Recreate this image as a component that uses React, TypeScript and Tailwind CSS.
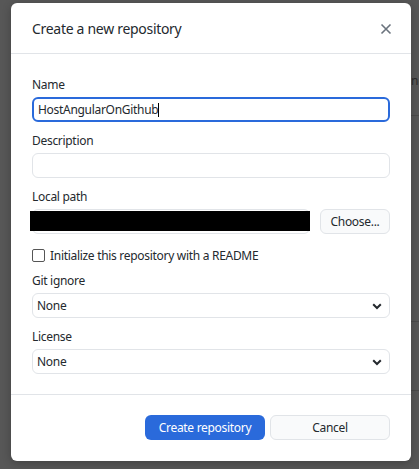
import React from "react";

const font = { fontFamily: '"Noto Sans", "Open Sans", sans-serif' };

function Field({ label, children }: { label: string; children: React.ReactNode }) {
  return (
    <div className="flex flex-col">
      <label className="text-[12px] leading-[16px] tracking-[-0.3px] text-[#24292e] mb-[4px]">{label}</label>
      {children}
    </div>
  );
}

function Chevron() {
  return (
    <svg width="10" height="7" viewBox="0 0 10 7" className="absolute right-[7px] top-[9px]">
      <path d="M1.2 1.2 L5 5 L8.8 1.2" fill="none" stroke="#24292e" strokeWidth="2" />
    </svg>
  );
}

function SelectBox({ value }: { value: string }) {
  return (
    <div className="relative h-[25px] rounded-[6px] border border-[#e1e4e8] bg-white flex items-center pl-[4px] text-[12px] tracking-[-0.3px] text-[#24292e]">
      {value}
      <Chevron />
    </div>
  );
}

export default function App() {
  return (
    <div className="w-[419px] h-[469px] bg-[#575757] overflow-hidden relative" style={font}>
      {/* backdrop bits peeking out on the right */}
      <div className="absolute left-[411px] top-[72px] text-[12px] text-[#2b2b2b]">ne</div>
      <div className="absolute left-[411px] top-[115px] w-[8px] h-px bg-[#4a4a4a]" />
      <div className="absolute left-[411px] top-[321px] w-[8px] h-px bg-[#4a4a4a]" />
      <div className="absolute left-[411px] top-[390px] w-[8px] h-px bg-[#4a4a4a]" />

      <div className="relative ml-[11px] mt-[3px] w-[400px] h-[458px] bg-white rounded-[6px] flex flex-col shadow-[0_2px_8px_rgba(0,0,0,0.25)]">
        <div className="h-[51px] flex items-center justify-between px-[21px] border-b border-[#e1e4e8]">
          <h1 className="text-[14px] tracking-[-0.3px] text-[#24292e] mt-[1px]">Create a new repository</h1>
          <svg width="12" height="12" viewBox="0 0 12 12" className="mr-[-2px] mt-[2px]">
            <path d="M1.5 1.5 L10.5 10.5 M10.5 1.5 L1.5 10.5" stroke="#6a737d" strokeWidth="1.6" />
          </svg>
        </div>

        <div className="flex flex-col px-[21px] pt-[23px] pb-[20px] border-b border-[#e1e4e8]">
          <div className="flex flex-col gap-[11px]">
            <Field label="Name">
              <div className="h-[25px] rounded-[6px] border-2 border-[#2a6adb] flex items-center pl-[4px] text-[12px] tracking-[-0.3px] text-[#24292e]">
                HostAngularOnGithub
                <span className="w-px h-[14px] bg-black" />
              </div>
            </Field>
            <Field label="Description">
              <div className="h-[25px] rounded-[6px] border border-[#e1e4e8]" />
            </Field>
            <Field label="Local path">
              <div className="flex gap-[10px]">
                <div className="relative flex-1 h-[25px] rounded-[6px] border border-[#e1e4e8]">
                  <div className="absolute left-[-3px] right-[-1px] top-[1px] h-[20px] bg-black" />
                </div>
                <button className="w-[70px] h-[25px] rounded-[6px] border border-[#e1e4e8] bg-[#f9fafb] text-[12px] tracking-[-0.3px] text-[#24292e]">
                  Choose...
                </button>
              </div>
            </Field>
          </div>

          <div className="flex items-center gap-[5px] mt-[15px] mb-[11px] h-[13px]">
            <span className="w-[13px] h-[13px] rounded-[2px] border border-[#555] bg-white" />
            <span className="text-[12px] tracking-[-0.3px] text-[#24292e]">Initialize this repository with a README</span>
          </div>

          <div className="flex flex-col gap-[11px]">
            <Field label="Git ignore">
              <SelectBox value="None" />
            </Field>
            <Field label="License">
              <SelectBox value="None" />
            </Field>
          </div>
        </div>

        <div className="flex justify-end gap-[5px] px-[21px] pt-[20px]">
          <button className="w-[120px] h-[25px] rounded-[6px] bg-[#2a6adb] text-white text-[12px] tracking-[-0.3px]">
            Create repository
          </button>
          <button className="w-[120px] h-[25px] rounded-[6px] border border-[#e1e4e8] bg-[#f9fafb] text-[12px] tracking-[-0.3px] text-[#24292e]">
            Cancel
          </button>
        </div>
      </div>
    </div>
  );
}
